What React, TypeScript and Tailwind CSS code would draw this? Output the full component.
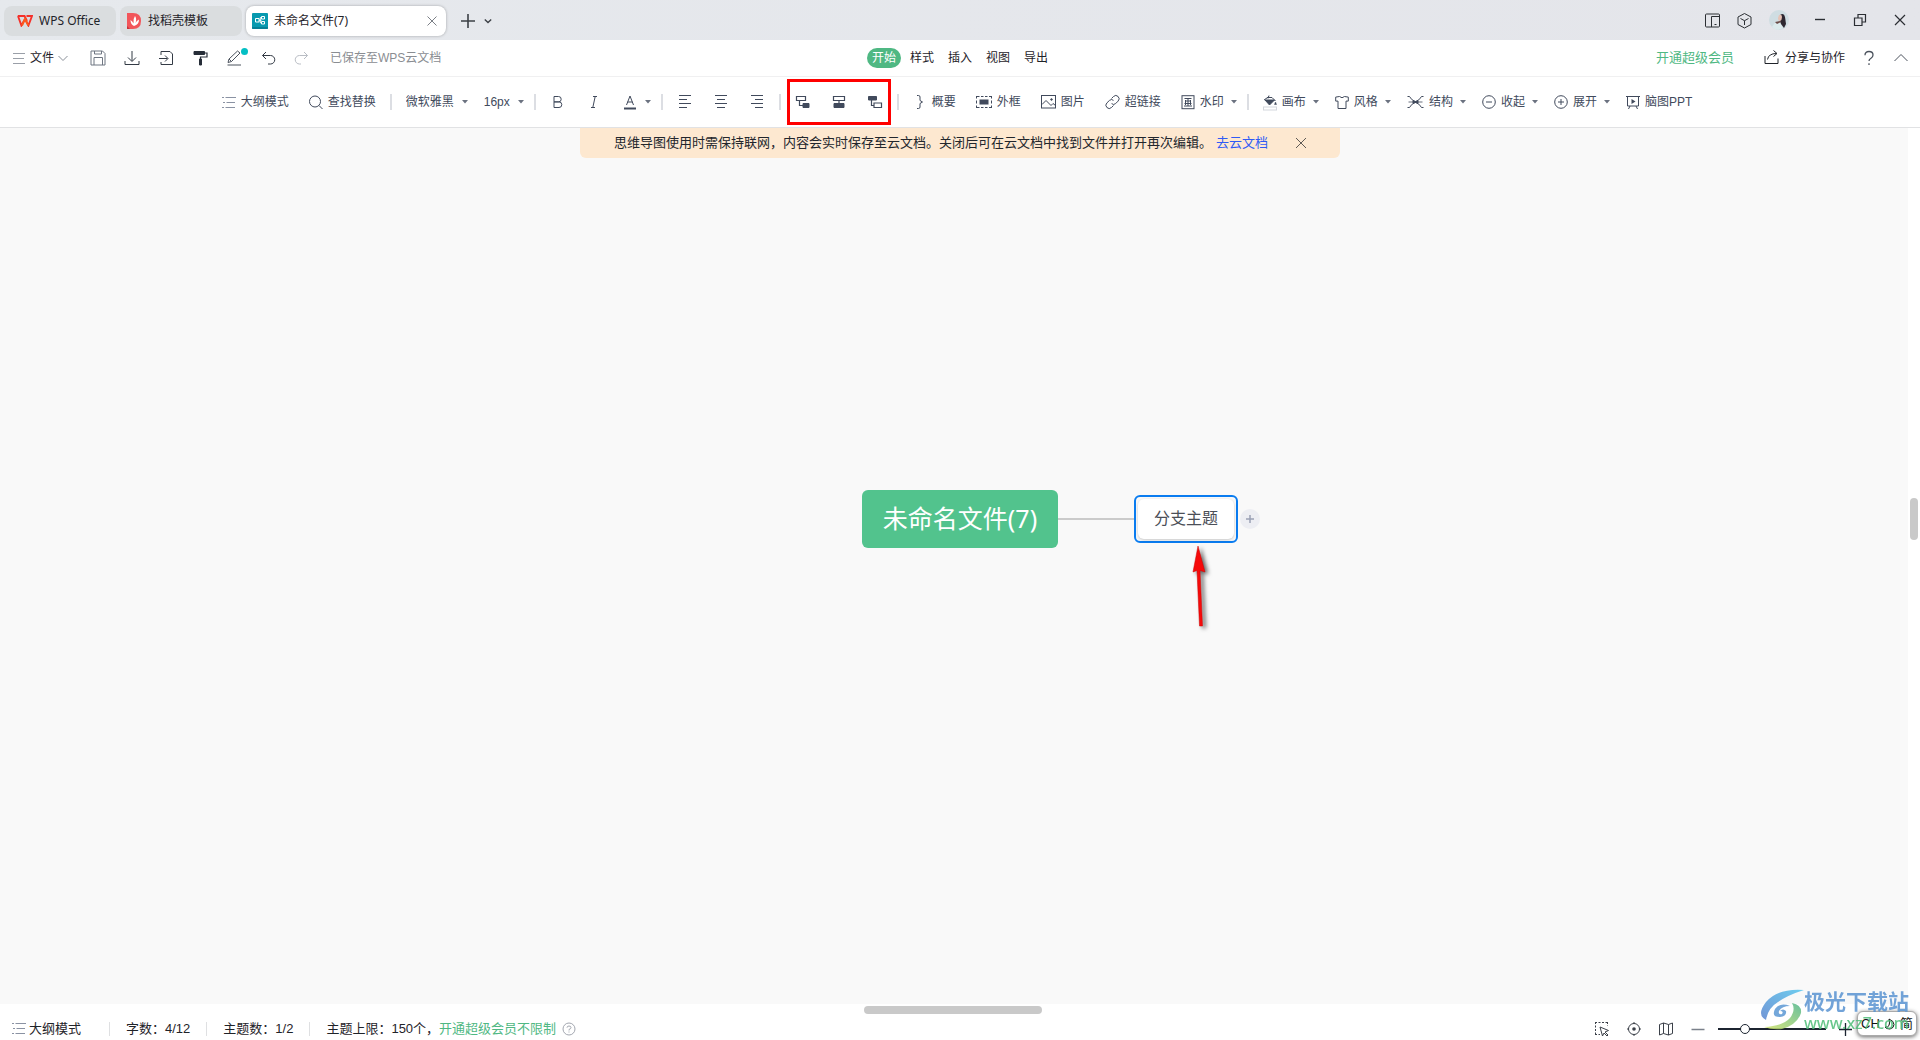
import React from 'react';

type IconProps = { children: React.ReactNode; size?: string; box?: string };

const Icon: React.FC<IconProps> = ({ children, size = 'w-[14px] h-[14px]', box = '0 0 14 14' }) => (
  <svg viewBox={box} className={`${size} shrink-0 overflow-visible`} fill="none" stroke="currentColor" strokeWidth="1" aria-hidden="true">
    {children}
  </svg>
);

const Caret = () => (
  <svg viewBox="0 0 6 4" className="w-[6px] h-[4px] ml-[2px] -mr-1 shrink-0 pointer-events-none" fill="#6b7280" aria-hidden="true">
    <path d="M0 0h6L3 3.5z" />
  </svg>
);

const Separator = () => <span className="w-[2px] h-4 mx-1 bg-[#dcdee3] shrink-0" />;

const ListIcon = () => (
  <Icon>
    <path d="M0 2.5h2M3.5 2.5H14M1 7.5h2M4.500 7.5H13M0 12.500h2M3.5 12.500H13" stroke="#8a92a3" />
  </Icon>
);

const icons = {
  search: <><circle cx="6" cy="6.500" r="5.500" /><path d="M10 10.500l3.500 3.500" /></>,
  summary: <path d="M4 .5h1.500q1.500 0 1.500 1.500v3.500L9.500 7 7 8.500V12q0 1.500-1.500 1.500H4" />,
  frame: (
    <>
      <path d="M1 1.500h2.500M5 1.500h2.500M9 1.500h2.500M13 1.500h2.500M1 12.500h2.500M5 12.500h2.500M9 12.500h2.500M13 12.500h2.500M.5 1v2.500M.5 5.500v3M.5 10.500V13M15.500 1v2.500M15.500 5.500v3M15.500 10.500V13" />
      <rect x="3.500" y="4.500" width="9" height="5" fill="currentColor" stroke="none" />
    </>
  ),
  image: <><rect x=".5" y=".5" width="14" height="12.500" /><path d="M1 9.500l4-4 5 5 2-2 2.500 2" /><circle cx="10.500" cy="4.500" r=".8" fill="currentColor" /></>,
  link: <path d="M6.500 3.500l2-2a3.200 3.200 0 0 1 4.600 4.600l-2.500 2.500a3 3 0 0 1-4 0M8.500 10.500l-2 2a3.200 3.200 0 0 1-4.600-4.600L4.500 5.400a3 3 0 0 1 4 0" />,
  watermark: <><rect x="1" y=".7" width="12" height="13" /><path d="M3.500 3.500h7M4 6h6M3.500 8.500h7M3 11h8M7 3.500V11M4.500 5v5M9.500 5v5" /></>,
  canvas: (
    <>
      <path d="M6 .5l-1 3M4 2.500h5l3.500 3.500M1 5l5-3.500" />
      <path d="M2 5h9.500L6.500 10z" fill="currentColor" />
      <path d="M12.500 7l1 2.500h-2z" fill="currentColor" strokeWidth=".5" />
      <rect x=".5" y="12" width="13" height="3" stroke="#d4d7dd" />
    </>
  ),
  style: <path d="M4.500 1.500q2.500 2.500 5 0l3.800.6v4h-2.300v7.400H3V6.100H.7v-4z" />,
  structure: (
    <>
      <path d="M.5 1.500h2Q4.500 5.500 8.500 6.500 12.500 5.500 14.500 1.500h2M.5 12.500h2Q4.500 8.500 8.500 7.500 12.500 8.500 14.500 12.500h2" />
      <path d="M1.500 7h14" strokeWidth=".8" />
      <path d="M5.500 7h6" strokeWidth="2" />
    </>
  ),
  collapse: <><circle cx="7" cy="7" r="6.300" /><path d="M4 7h6" /></>,
  expand: <><circle cx="7" cy="7" r="6.300" /><path d="M4 7h6M7 4v6" /></>,
  slides: <><path d="M0 1.500h14M1.500 1.500v9.500h11V1.500M4 11l-1.500 3M10 11l1.500 3" /><path d="M5.500 4v5l4-2.500z" fill="currentColor" stroke="none" /></>,
};

const Tool: React.FC<{ icon: React.ReactNode; label: string; caret?: boolean }> = ({ icon, label, caret }) => (
  <button type="button" className="flex items-center gap-[5px] h-8 px-[10px] whitespace-nowrap shrink-0">
    {icon}
    <span>{label}</span>
    {caret && <Caret />}
  </button>
);

const Glyph: React.FC<{ label: string; children: React.ReactNode; caret?: boolean }> = ({ label, children, caret }) => (
  <button type="button" aria-label={label} className="flex items-center gap-[5px] h-8 px-[10px] shrink-0">
    <Icon size="w-4 h-4" box="0 0 16 16">{children}</Icon>
    {caret && <Caret />}
  </button>
);

const TitleBar = () => (
  <div className="flex items-center h-10 pl-1 pr-[14px] bg-linear-to-r from-[#e6e9ed] to-[#e4e5ea] text-[#1f2329] font-['Noto_Sans','Noto_Sans_CJK_SC',sans-serif]">
    <div className="flex items-center gap-1 mt-[2px]">
      <button type="button" className="flex items-center gap-[6px] w-[112px] h-[30px] pl-[13px] rounded-lg bg-[#dadddf]">
        <svg viewBox="0 0 16 12" className="w-4 h-3" fill="none" stroke="#f5302a" strokeWidth="1.900" aria-hidden="true">
          <path d="M.8 1h6.700L10 6M1 1l3.400 9.500L8 4l3.400 6.500L15 1H9.500" />
          <path d="M5 10.500L8 4l3.400 6.500" stroke="#fb5a1c" />
        </svg>
        WPS Office
      </button>
      <button type="button" className="flex items-center gap-[7px] w-[122px] h-[30px] pl-[7px] rounded-lg bg-[#dadddf]">
        <svg viewBox="0 0 14 16" className="w-[14px] h-4" aria-hidden="true">
          <path d="M0 0h6q8 0 8 8t-8 8H0z" fill="#f2555a" />
          <path d="M0 13l3 3H0z" fill="#c93339" />
          <path d="M7 13Q3.500 11.500 3.500 7q2 1 3 3.500Q5.800 6 8 3q2 3 .5 7 1-2.500 3.500-3.500 0 5-5 6.500z" fill="#fff" />
        </svg>
        找稻壳模板
      </button>
      <div className="flex items-center w-[200px] h-[30px] px-[6px] rounded-lg bg-white shadow-[0_0_3px_rgba(0,0,0,0.3)]">
        <svg viewBox="0 0 16 16" className="w-4 h-4 mr-[6px]" fill="none" aria-hidden="true">
          <rect width="16" height="16" rx="1" fill="#0799af" />
          <path d="M0 14h16v1q0 1-1 1H1q-1 0-1-1z" fill="#067f96" />
          <path d="M3.500 5.500h3.500v3.500h-3.500zM7 7.200h2.500M9.500 3.500h3v2.500h-3zM9.500 8.500h3V11h-3zM8.200 4.700h1.300M8.200 4.700v5h1.300" stroke="#fff" />
        </svg>
        <span className="flex-1">未命名文件(7)</span>
        <button type="button" aria-label="关闭标签" className="text-[#7b7f86] mr-[3px]">
          <Icon size="w-[10px] h-[10px]" box="0 0 10 10"><path d="M.5.5l9 9M9.500.5l-9 9" /></Icon>
        </button>
      </div>
    </div>
    <div className="flex items-center gap-[9px] ml-[15px] mt-[2px] text-[#3c4046]">
      <button type="button" aria-label="新建标签"><Icon><path d="M7 0v14M0 7h14" strokeWidth="1.600" /></Icon></button>
      <button type="button" aria-label="标签列表"><Icon size="w-2 h-2" box="0 0 8 8"><path d="M.8 2.500L4 5.500l3.200-3" strokeWidth="1.400" /></Icon></button>
    </div>
    <div className="flex items-center ml-auto text-[#2b2e33]">
      <div className="flex items-center gap-[17px]">
        <button type="button" aria-label="侧边栏">
          <Icon size="w-[15px] h-[15px]" box="0 0 15 15"><rect x=".5" y="1" width="14" height="13" rx="1" /><path d="M6.500 14V3.500h8M9.500 11.500h2" /></Icon>
        </button>
        <button type="button" aria-label="应用">
          <Icon size="w-[15px] h-[15px]" box="0 0 15 15"><path d="M7.500.5l6.500 3.500v7.500L7.500 15 1 11.500V4zM3.500 5.500l4 2.200 4-2.200M7.500 7.700V12" /></Icon>
        </button>
        <button type="button" aria-label="账户">
          <svg viewBox="0 0 20 20" className="w-5 h-5" aria-hidden="true">
            <circle cx="10" cy="10" r="10" fill="#cfdde2" />
            <path d="M3 17q3-6 8-5l3 6q-6 4-11-1z" fill="#dcebed" />
            <path d="M11 5q4-3 5 2l1 7-2 4-3-4-1-3z" fill="#2d2730" />
            <path d="M10 5q3-1 3 2t-2 4q-2 0-2-3z" fill="#e6c3b5" />
            <path d="M6 12l5-1 1 1-4 2z" fill="#6b4c48" />
          </svg>
        </button>
      </div>
      <div className="flex items-center gap-[28px] ml-[25px]">
        <button type="button" aria-label="最小化"><Icon size="w-3 h-3" box="0 0 12 12"><path d="M1 5.500h10" strokeWidth="1.400" /></Icon></button>
        <button type="button" aria-label="还原"><Icon size="w-3 h-3" box="0 0 12 12"><path d="M.5 4h7.500v7.500H.5zM4 4V.5h7.500v7.500H8" strokeWidth="1.200" /></Icon></button>
        <button type="button" aria-label="关闭"><Icon size="w-3 h-3" box="0 0 12 12"><path d="M1 1l10 10M11 1L1 11" strokeWidth="1.200" /></Icon></button>
      </div>
    </div>
  </div>
);

const QUICK_ACTIONS = [
  { label: '保存', color: 'text-[#6f7682]', d: 'M1 1h11.500L15 3.500V15H1zM4.500 1v3h7V1M4 15V7.500h8.500V15' },
  { label: '下载', color: 'text-[#333a45]', d: 'M8 1v10M4 7.500L8 11.500l4-4M1 11v3.500h14V11' },
  { label: '导入', color: 'text-[#333a45]', d: 'M3 5V1.500h9L14.500 4v10.500H3V12M1 8.500h8.500M7 5.500l3 3-3 3' },
];

const MenuBar = () => (
  <div className="grid grid-cols-[1fr_auto_1fr] items-center h-[37px] bg-white border-b border-[#f0f0f1] text-[#1f2329]">
    <div className="flex items-center pl-3">
      <button type="button" className="flex items-center gap-1 mr-[22px]">
        <Icon><path d="M1 2.500h12M1 7.500h11M1 12.500h12" stroke="#9a9fa8" /></Icon>
        <span>文件</span>
        <Icon size="w-[10px] h-[10px]" box="0 0 10 10"><path d="M.5 3L5 7.500 9.500 3" stroke="#8a9099" /></Icon>
      </button>
      <div className="flex items-center gap-[18px]">
        {QUICK_ACTIONS.map(a => (
          <button key={a.label} type="button" aria-label={a.label} className={a.color}>
            <Icon size="w-4 h-4" box="0 0 16 16"><path d={a.d} /></Icon>
          </button>
        ))}
        <button type="button" aria-label="格式刷" className="text-[#262d38]">
          <Icon size="w-4 h-4" box="0 0 16 16">
            <path d="M2 1.500h10.500v3H2z" fill="currentColor" />
            <path d="M13 3h2v4H8.500v2" strokeWidth="1.200" />
            <path d="M7.500 9h2v6h-2z" fill="currentColor" />
          </Icon>
        </button>
        <button type="button" aria-label="画笔" className="relative text-[#4b525d]">
          <Icon size="w-4 h-4" box="0 0 16 16"><path d="M2 12.500l1-3.500L11.500 1l2.500 2L5.500 11.500zM3 9l2.500 2.500M1.500 15H15" /></Icon>
          <span className="absolute -top-[2px] -right-[6px] w-[7px] h-[7px] rounded-full bg-[#04bfc4]" />
        </button>
        <button type="button" aria-label="撤销" className="text-[#333a45]">
          <Icon size="w-4 h-4" box="0 0 16 16"><path d="M6 2L2.500 5.500 6 9M2.500 5.500h8a4 4 0 0 1 0 8.500H8" /></Icon>
        </button>
        <button type="button" aria-label="重做" className="text-[#b9bdc4]">
          <Icon size="w-4 h-4" box="0 0 16 16"><path d="M10 2l3.500 3.500L10 9M13.500 5.500h-8a4 4 0 0 0 0 8.500H7" /></Icon>
        </button>
      </div>
      <span className="ml-5 text-[#8a8d92] whitespace-nowrap">已保存至WPS云文档</span>
    </div>

    <nav className="flex items-center gap-1">
      <button type="button" className="h-5 px-[5px] rounded-full bg-[#4fb883] text-white">开始</button>
      {['样式', '插入', '视图', '导出'].map(name => (
        <button key={name} type="button" className="h-5 px-[5px]">{name}</button>
      ))}
    </nav>

    <div className="flex items-center justify-end pr-3">
      <a href="#vip" className="text-[13px] text-[#4fb883]">开通超级会员</a>
      <button type="button" className="flex items-center gap-[6px] ml-[30px]">
        <Icon size="w-[15px] h-[15px]" box="0 0 15 15"><path d="M1 6v7.500h13V8.500M3.500 9.500q1-6 9-6M9.500.5l3.500 3-3.500 3" /></Icon>
        分享与协作
      </button>
      <button type="button" aria-label="帮助" className="ml-[17px] text-[#4b525d]">
        <Icon><path d="M3 4.200Q3 .5 7 .5t4 3.500q0 2-2 3.200T7 10M7 12.200v1.800" strokeWidth="1.300" /></Icon>
      </button>
      <button type="button" aria-label="收起功能区" className="ml-[18px] text-[#4b525d]">
        <Icon><path d="M.5 10L7 3.500l6.500 6.500" /></Icon>
      </button>
    </div>
  </div>
);

const Toolbar = () => (
  <div className="flex items-center justify-center h-[51px] pr-[6px] bg-white border-b border-[#e1e2e4] text-[#414a5c]">
    <Tool icon={<ListIcon />} label="大纲模式" />
    <Tool icon={<Icon>{icons.search}</Icon>} label="查找替换" />
    <Separator />
    <label className="flex items-center gap-[5px] px-[10px]">
      <select aria-label="字体" className="appearance-none w-[49px] bg-transparent outline-none">
        <option>微软雅黑</option>
      </select>
      <Caret />
    </label>
    <label className="flex items-center gap-[5px] px-[10px]">
      <select aria-label="字号" className="appearance-none w-[27px] bg-transparent outline-none">
        <option>16px</option>
      </select>
      <Caret />
    </label>
    <Separator />
    <Glyph label="加粗"><path d="M4 2.500h4.500a2.700 2.700 0 0 1 0 5.400H4zM4 7.900h5a2.800 2.800 0 0 1 0 5.600H4z" /></Glyph>
    <Glyph label="斜体"><path d="M7 2.500h4M5 13.500h4M9.200 2.500l-2.400 11" /></Glyph>
    <Glyph label="字体颜色" caret>
      <path d="M4.500 11L8 2l3.500 9M5.500 8h5" />
      <path d="M2 14.500h12" strokeWidth="2" />
    </Glyph>
    <Separator />
    <Glyph label="左对齐"><path d="M2 1.500h12M2 5.500h8M2 9.500h12M2 13.500h8" strokeWidth="1.200" /></Glyph>
    <Glyph label="居中"><path d="M2 1.500h12M4 5.500h8M2 9.500h12M4 13.500h8" strokeWidth="1.200" /></Glyph>
    <Glyph label="右对齐"><path d="M2 1.500h12M6 5.500h8M2 9.500h12M6 13.500h8" strokeWidth="1.200" /></Glyph>
    <Separator />
    <div className="relative flex items-center">
      <Glyph label="子主题">
        <path d="M1.500 2.500h9v4h-9zM4.500 6.500v5H8" strokeWidth="1.200" />
        <path d="M8 9.500h6v4H8z" fill="currentColor" />
      </Glyph>
      <Glyph label="同级主题">
        <path d="M2.500 2.500h11v4h-11zM8 6.500V10" strokeWidth="1.200" />
        <path d="M3 9.500h10v4H3z" fill="currentColor" />
      </Glyph>
      <Glyph label="父主题">
        <path d="M1.500 2.500h8v3.500h-8z" fill="currentColor" />
        <path d="M4.500 6v5.500H7M7 9h7.500v4.500H7z" strokeWidth="1.200" />
      </Glyph>
      <span className="absolute inset-x-[2px] -inset-y-[7px] border-3 border-[#ff0000] pointer-events-none" />
    </div>
    <Separator />
    <Tool icon={<Icon>{icons.summary}</Icon>} label="概要" />
    <Tool icon={<Icon size="w-4 h-[14px]" box="0 0 16 14">{icons.frame}</Icon>} label="外框" />
    <Tool icon={<Icon size="w-[15px] h-[14px]" box="0 0 15 14">{icons.image}</Icon>} label="图片" />
    <Tool icon={<Icon size="w-[15px] h-[14px]" box="0 0 15 14">{icons.link}</Icon>} label="超链接" />
    <Tool icon={<Icon>{icons.watermark}</Icon>} label="水印" caret />
    <Separator />
    <Tool icon={<Icon>{icons.canvas}</Icon>} label="画布" caret />
    <Tool icon={<Icon>{icons.style}</Icon>} label="风格" caret />
    <Tool icon={<Icon size="w-[17px] h-[14px]" box="0 0 17 14">{icons.structure}</Icon>} label="结构" caret />
    <Tool icon={<Icon>{icons.collapse}</Icon>} label="收起" caret />
    <Tool icon={<Icon>{icons.expand}</Icon>} label="展开" caret />
    <Tool icon={<Icon>{icons.slides}</Icon>} label="脑图PPT" />
  </div>
);

const Canvas = () => (
  <main className="relative flex-1 bg-[#f9f9f9] border-r-12 border-white">
    <div className="flex items-center justify-center w-[760px] h-[30px] mx-auto translate-x-[6px] rounded-b-md bg-[#fde8d0] text-[13px] text-[#22262c]">
      <span>思维导图使用时需保持联网，内容会实时保存至云文档。关闭后可在云文档中找到文件并打开再次编辑。</span>
      <a href="#cloud" className="ml-1 text-[#2f5bf5]">去云文档</a>
      <button type="button" aria-label="关闭提示" className="ml-[28px] text-[#5f5a55]">
        <Icon size="w-[10px] h-[10px]" box="0 0 10 10"><path d="M0 0l10 10M10 0L0 10" /></Icon>
      </button>
    </div>

    {/* mind map nodes */}
    <div className="absolute top-[362px] left-[calc(50%_-_92px)] flex items-center text-[#4b4f57]">
      <div className="flex items-center justify-center w-[196px] h-[58px] rounded-md bg-[#52c38d] text-white text-[25px] whitespace-nowrap font-['Noto_Sans','Noto_Sans_CJK_SC',sans-serif]">
        未命名文件(7)
      </div>
      <div className="w-[76px] h-[2px] bg-[#cbcbcb]" />
      <div className="w-[104px] h-[48px] p-[2px] rounded-md border-2 border-[#0a7cf0]">
        <div className="flex items-center justify-center h-full rounded-md bg-white text-base shadow-[0_1px_3px_rgba(0,0,0,0.2)]">分支主题</div>
      </div>
      <button type="button" aria-label="添加主题" className="flex items-center justify-center w-5 h-5 ml-[2px] rounded-full bg-[#edeef3] text-[#9aa1b5]">
        <Icon size="w-2 h-2" box="0 0 8 8"><path d="M4 0v8M0 4h8" strokeWidth="1.500" /></Icon>
      </button>
      <svg viewBox="0 0 24 86" className="absolute top-[54px] left-[326px] w-6 h-[86px] drop-shadow-[3px_2px_2px_rgba(0,0,0,0.6)]" aria-hidden="true">
        <path d="M10 2l7 26-5-1.500 2.500 55.500h-3L9 26.500 5 28z" fill="#f60a0a" stroke="#c00" strokeWidth=".5" />
      </svg>
    </div>

    <span className="absolute top-[370px] -right-[10px] w-2 h-[42px] rounded-full bg-[#c9c9c9]" />
    <span className="absolute -bottom-[10px] left-[calc(50%_-_90px)] w-[178px] h-2 rounded-full bg-[#c9c9c9]" />
  </main>
);

const FooterRule = () => <span className="w-px h-[14px] mx-4 bg-[#dfe0e2]" />;

const StatusBar = () => (
  <footer className="flex items-center h-9 pt-[14px] pb-[1px] pl-3 pr-[67px] bg-white text-[13px] text-[#1f2329]">
    <button type="button" className="flex items-center gap-[3px] mr-3"><ListIcon />大纲模式</button>
    <FooterRule />
    <span>字数：4/12</span>
    <FooterRule />
    <span>主题数：1/2</span>
    <FooterRule />
    <span>主题上限：150个，</span>
    <a href="#vip" className="text-[#4fb883]">开通超级会员不限制</a>
    <button type="button" aria-label="说明" className="ml-[6px] text-[#a3a7b0]">
      <Icon><circle cx="7" cy="7" r="6" /><path d="M5 5.700Q5 4 7 4t2 1.600Q9 6.800 7 7.500v1M7 9.500v1" /></Icon>
    </button>

    <div className="flex items-center gap-[18px] ml-auto text-[#3b4049]">
      <button type="button" aria-label="框选">
        <Icon><path d="M0 .5h12.500M.5 0v12.500M12.500 0v4M0 12.500h5" strokeDasharray="2 1.500" /><path d="M5 5l8.500 3.500-3.500 1.500 3 3-1 1-3-3-1.500 3z" /></Icon>
      </button>
      <button type="button" aria-label="定位中心">
        <Icon><circle cx="7" cy="7" r="5.500" /><circle cx="7" cy="7" r="1.800" fill="currentColor" stroke="none" /><path d="M7 0v2M7 12v2M0 7h2M12 7h2" /></Icon>
      </button>
      <button type="button" aria-label="导航图">
        <Icon><path d="M.5 2.500L4.500 1l5 1.500L13.500 1v10.500l-4 1.500-5-1.500-4 1.500zM4.500 1v10.500M9.500 2.500V13" /></Icon>
      </button>
      <div className="flex items-center gap-[13px]">
        <button type="button" aria-label="缩小"><Icon><path d="M.5 7.500h13" stroke="#7b818b" strokeWidth="1.500" /></Icon></button>
        <input
          type="range"
          aria-label="缩放比例"
          defaultValue={22}
          className="appearance-none w-[108px] h-[2px] bg-[#1c2430] outline-none [&::-webkit-slider-thumb]:appearance-none [&::-webkit-slider-thumb]:w-[10px] [&::-webkit-slider-thumb]:h-[10px] [&::-webkit-slider-thumb]:rounded-full [&::-webkit-slider-thumb]:bg-white [&::-webkit-slider-thumb]:border [&::-webkit-slider-thumb]:border-[#1c2430]"
        />
        <button type="button" aria-label="放大"><Icon><path d="M0 7.500h13M6.500 1v13" stroke="#1c2430" strokeWidth="1.300" /></Icon></button>
      </div>
    </div>
  </footer>
);

const Watermark = () => (
  <div className="absolute right-[11px] bottom-[7px] flex items-end pointer-events-none opacity-85">
    <svg viewBox="0 0 44 42" className="w-11 h-[42px] mb-[2px]" aria-hidden="true">
      <defs>
        <linearGradient id="swirl-blue" x1="0" y1="1" x2="1" y2="0">
          <stop offset="0" stopColor="#5a84cf" />
          <stop offset="1" stopColor="#56c6ee" />
        </linearGradient>
        <linearGradient id="swirl-green" x1="0" y1="1" x2="1" y2="0">
          <stop offset="0" stopColor="#d3e36a" />
          <stop offset="1" stopColor="#4fb58c" />
        </linearGradient>
      </defs>
      <path d="M44 1Q18-1 6 13-4 26 6 31q2-12 12-18Q28 6 44 1z" fill="url(#swirl-blue)" />
      <path d="M32 14q10 2 9 10Q37 36 22 40q-10 1-18-2 19-1 26-9 6-8 2-15z" fill="url(#swirl-green)" />
      <path d="M30 17q-10-4-15 3-4 8 5 8 7-1 6-6-3-3-6 0 4 0 2 3-4 1-3-3 3-5 11-5z" fill="#5c98d4" />
    </svg>
    <div className="font-['Noto_Sans','Noto_Sans_CJK_SC',sans-serif]">
      <div className="text-[21px] leading-6 font-bold text-[#5a94d2]">极光下载站</div>
      <div className="text-base leading-5 font-medium text-[#4fbd78]">www.xz7.com</div>
    </div>
  </div>
);

const InputMethodBar = () => (
  <div className="absolute right-[3px] bottom-1 flex items-center justify-center gap-1 w-[60px] h-[25px] rounded-md border border-[#aaa] bg-white shadow-[0_1px_4px_rgba(0,0,0,0.6)] text-[13px] text-[#111]">
    <span>CH</span>
    <Icon size="w-3 h-3" box="0 0 12 12"><path d="M5 1q5 2 5 5.500T6 11Q2 11 1 9q6 1 4-8z" /></Icon>
    <span>简</span>
  </div>
);

export default function App() {
  return (
    <div className="relative flex flex-col min-h-screen bg-white text-xs font-['Liberation_Sans','Noto_Sans_CJK_SC',sans-serif]">
      <TitleBar />
      <MenuBar />
      <Toolbar />
      <Canvas />
      <StatusBar />
      <InputMethodBar />
      <Watermark />
    </div>
  );
}
